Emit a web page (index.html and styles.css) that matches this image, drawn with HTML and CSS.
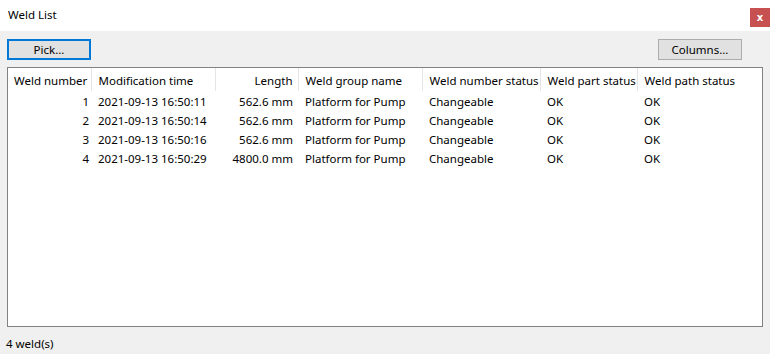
FILE: index.html
```html
<!DOCTYPE html>
<html lang="en">
<head>
    <meta charset="UTF-8">
    <title>Weld List</title>
    <link rel="stylesheet" href="styles.css">
</head>
<body>
    <div class="window">
        <div class="title-bar">
            <span class="title">Weld List</span>
            <button class="close-btn">x</button>
        </div>
        <div class="window-body">
            <div class="toolbar">
                <button class="btn btn-focus">Pick...</button>
                <button class="btn">Columns...</button>
            </div>
            <div class="list-box">
                <table class="weld-table">
                    <colgroup>
                        <col class="c1"><col class="c2"><col class="c3"><col class="c4"><col class="c5"><col class="c6"><col>
                    </colgroup>
                    <thead>
                        <tr>
                            <th class="first">Weld number</th>
                            <th>Modification time</th>
                            <th class="num">Length</th>
                            <th>Weld group name</th>
                            <th>Weld number status</th>
                            <th>Weld part status</th>
                            <th class="last">Weld path status</th>
                        </tr>
                    </thead>
                    <tbody id="weld-rows"></tbody>
                </table>
            </div>
            <div class="status">4 weld(s)</div>
        </div>
    </div>

    <script>
        const welds = [
            { no: 1, time: "2021-09-13 16:50:11", length: "562.6 mm" },
            { no: 2, time: "2021-09-13 16:50:14", length: "562.6 mm" },
            { no: 3, time: "2021-09-13 16:50:16", length: "562.6 mm" },
            { no: 4, time: "2021-09-13 16:50:29", length: "4800.0 mm" }
        ];

        const body = document.getElementById('weld-rows');
        welds.forEach(w => {
            const tr = document.createElement('tr');
            tr.innerHTML = `
                <td class="weld-no">${w.no}</td>
                <td>${w.time}</td>
                <td class="num">${w.length}</td>
                <td>Platform for Pump</td>
                <td>Changeable</td>
                <td>OK</td>
                <td>OK</td>
            `;
            body.appendChild(tr);
        });
    </script>
</body>
</html>
```

FILE: styles.css
```css
body, html {
    font-family: "Noto Sans", "Open Sans", sans-serif;
    font-size: 11.5px;
    color: #000000;
    margin: 0;
    padding: 0;
    background-color: #f0f0f0;
}
.window {
    width: 770px;
    height: 354px;
    display: flex;
    flex-direction: column;
    background-color: #f0f0f0;
}
.title-bar {
    height: 31px;
    background-color: #ffffff;
    display: flex;
    justify-content: space-between;
    align-items: flex-start;
    border-top: 1px solid #ffffff;
    box-sizing: border-box;
}
.title {
    margin-left: 8px;
    margin-top: 6px;
}
.close-btn {
    margin-top: 7px;
    width: 20px;
    height: 19px;
    border: none;
    padding: 0;
    background-color: #c75050;
    color: #ffffff;
    font-family: "DejaVu Sans", sans-serif;
    font-weight: bold;
    font-size: 10px;
    line-height: 17px;
}
.window-body {
    flex-grow: 1;
    display: flex;
    flex-direction: column;
    padding: 8px 8px 0 7px;
}
.toolbar {
    display: flex;
    justify-content: space-between;
    padding-right: 20px;
}
.btn {
    width: 84px;
    height: 21px;
    box-sizing: border-box;
    background-color: #e1e1e1;
    border: 1px solid #adadad;
    font-family: inherit;
    font-size: 11.5px;
    padding: 0;
    color: #000000;
    line-height: 17px;
}
.btn-focus {
    border: 2px solid #0078d7;
}
.list-box {
    margin-top: 7px;
    width: 756px;
    height: 260px;
    box-sizing: border-box;
    border: 1px solid #828282;
    background-color: #ffffff;
}
.weld-table {
    border-collapse: collapse;
    table-layout: fixed;
    width: 100%;
}
.c1 { width: 83px; }
.c2 { width: 124px; }
.c3 { width: 83px; }
.c4 { width: 124px; }
.c5 { width: 118px; }
.c6 { width: 97px; }
.weld-table th {
    height: 23px;
    padding: 2px 0 0 7px;
    font-weight: normal;
    text-align: left;
    white-space: nowrap;
    border-right: 1px solid #e5e5e5;
    box-sizing: border-box;
}
.weld-table th.first {
    padding-left: 6px;
}
.weld-table th.last {
    border-right: none;
}
.weld-table td {
    height: 19px;
    padding: 2px 0 0 7px;
    white-space: nowrap;
    line-height: 17px;
    box-sizing: border-box;
}
.weld-table th.num,
.weld-table td.num {
    text-align: right;
    padding-left: 0;
    padding-right: 5px;
}
.weld-table td.weld-no {
    text-align: right;
    padding-left: 0;
    padding-right: 2px;
}
.status {
    margin-top: 9px;
    margin-left: -1px;
}
```
